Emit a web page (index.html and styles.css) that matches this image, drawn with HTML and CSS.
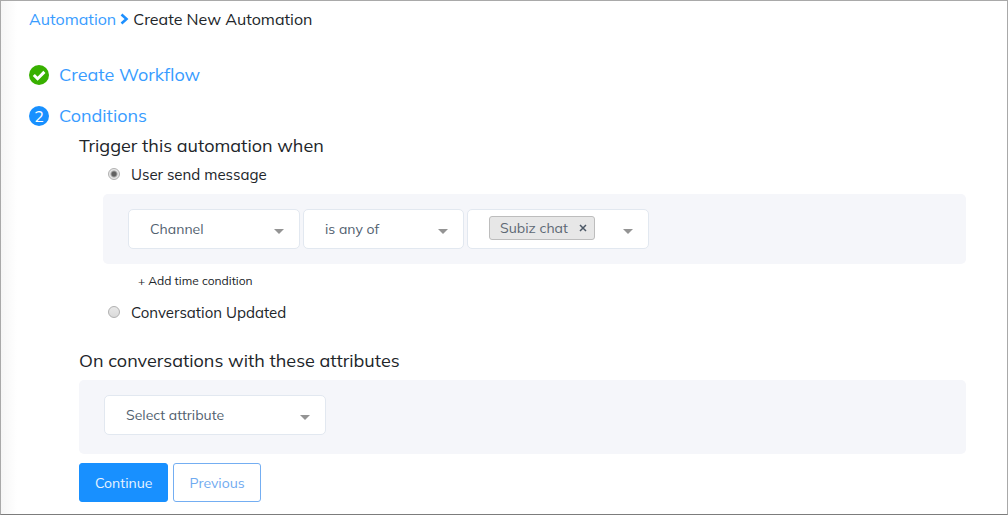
FILE: index.html
```html
<!DOCTYPE html>
<html lang="en">
<head>
<meta charset="utf-8">
<meta name="viewport" content="width=device-width, initial-scale=1">
<title>Create New Automation</title>
<link rel="stylesheet" href="styles.css">
</head>
<body>
<main class="page">
  <nav class="breadcrumb" aria-label="Breadcrumb">
    <a class="breadcrumb-link" href="#">Automation</a>
    <svg class="breadcrumb-icon" viewBox="0 0 9 12" aria-hidden="true"><path d="M1.5 1.5 6.5 6 1.5 10.5" fill="none" stroke="currentColor" stroke-width="2.6"/></svg>
    <span>Create New Automation</span>
  </nav>

  <a class="step" href="#">
    <svg class="step-icon" viewBox="0 0 20 20" aria-hidden="true"><circle cx="10" cy="10" r="10" fill="#38b000"/><path d="M4.8 10 8.6 13.7 15.4 6.9" fill="none" stroke="#fff" stroke-width="3"/></svg>
    <span>Create Workflow</span>
  </a>
  <a class="step" href="#">
    <span class="step-number">2</span>
    <span>Conditions</span>
  </a>

  <form class="conditions">
    <h2 class="section-title" id="trigger-title">Trigger this automation when</h2>
    <div class="triggers" role="radiogroup" aria-labelledby="trigger-title">
      <label class="option"><input class="radio" type="radio" name="trigger" checked>User send message</label>
      <div class="panel">
        <div class="select-wrap field">
          <select class="select" aria-label="Condition field"><option>Channel</option></select>
        </div>
        <div class="select-wrap operator">
          <select class="select" aria-label="Operator"><option>is any of</option></select>
        </div>
        <div class="tags">
          <span class="tag">Subiz chat<button class="tag-remove" type="button" aria-label="Remove Subiz chat"><svg class="tag-icon" viewBox="0 0 8 8" aria-hidden="true"><path d="M1 1 7 7M7 1 1 7" stroke="currentColor" stroke-width="1.5"/></svg></button></span>
          <button class="tags-toggle" type="button" aria-label="Show channels"></button>
        </div>
      </div>
      <button class="add-condition" type="button">+ Add time condition</button>
      <label class="option"><input class="radio" type="radio" name="trigger">Conversation Updated</label>
    </div>

    <h2 class="section-title attributes-title">On conversations with these attributes</h2>
    <div class="panel panel-attributes">
      <div class="select-wrap attribute">
        <select class="select" aria-label="Attribute"><option>Select attribute</option></select>
      </div>
    </div>

    <div class="actions">
      <button class="button button-primary" type="submit">Continue</button>
      <button class="button button-outline" type="button">Previous</button>
    </div>
  </form>
</main>
</body>
</html>
```
FILE: styles.css
```css
* { box-sizing: border-box; }

body {
  margin: 0;
  font-family: Mulish, Muli, "Open Sans", sans-serif;
  font-size: 16px;
  line-height: 24px;
  color: #212529;
}

button, select { font: inherit; }

.page {
  min-height: 100vh;
  padding: 6px 41px 12px 28px;
  border: 1px solid #a9a9a9;
  border-bottom-color: #7c7c7c;
  background: linear-gradient(to right, #f6f6f6, #fff 16px);
}

.breadcrumb {
  display: flex;
  align-items: center;
  gap: 4px;
  margin-bottom: 32px;
}

.breadcrumb-link { color: #389cff; text-decoration: none; }

.breadcrumb-icon { width: 9px; height: 12px; color: #1e90ff; }

.step {
  display: flex;
  align-items: center;
  gap: 10px;
  width: fit-content;
  margin-bottom: 17px;
  font-size: 18px;
  color: #389cff;
  text-decoration: none;
}

.step-icon, .step-number { width: 20px; height: 20px; }

.step-number {
  border-radius: 50%;
  background: #1890ff;
  color: #fff;
  font-size: 16px;
  line-height: 20px;
  text-align: center;
}

.conditions { margin: -11px 0 0 50px; }

.section-title { margin: 0; font-size: 18px; font-weight: 400; }

.triggers {
  display: flex;
  flex-direction: column;
  align-items: flex-start;
  padding: 4px 0 0 24px;
}

.option {
  display: flex;
  align-items: center;
  gap: 11px;
  padding: 1px 0 0 5px;
  font-size: 15px;
}

.radio {
  appearance: none;
  width: 12px;
  height: 12px;
  margin: 0 0 2px;
  border: 1px solid #b0b0b0;
  border-radius: 50%;
  background: linear-gradient(#e8e8e8, #dadada);
}

.radio:checked { background: radial-gradient(circle, #606060 0 2px, #e6e6e6 4px); }

.panel {
  display: flex;
  align-items: flex-start;
  gap: 3px;
  align-self: stretch;
  margin: 7px 0;
  padding: 15px 25px;
  border-radius: 5px;
  background: #f5f6fa;
}

.panel-attributes { margin-bottom: 9px; padding-bottom: 19px; }

.select-wrap, .tags {
  position: relative;
  height: 40px;
  border: 1px solid #e2e8f0;
  border-radius: 5px;
  background: #fff;
}

.field { width: 172px; }
.operator { width: 161px; }
.attribute { width: 222px; }

.select {
  appearance: none;
  width: 100%;
  height: 100%;
  padding: 0 36px 0 21px;
  border: 0;
  background: transparent;
  color: #52616f;
  font-size: 14px;
}

.select-wrap::after, .tags-toggle::after {
  content: "";
  border: 5px solid transparent;
  border-top-color: #949494;
  border-bottom: 0;
}

.select-wrap::after {
  position: absolute;
  right: 15px;
  top: 19px;
  pointer-events: none;
}

.tags {
  display: flex;
  align-items: center;
  justify-content: space-between;
  width: 182px;
  padding: 0 15px 2px 21px;
}

.tag {
  display: flex;
  align-items: center;
  gap: 11px;
  height: 24px;
  padding: 0 7px 0 10px;
  border: 1px solid #bdbdbd;
  border-radius: 3px;
  background: #e7e7e7;
  color: #5d6874;
  font-size: 14px;
}

.tag-remove, .tags-toggle {
  display: flex;
  padding: 0;
  border: 0;
  background: none;
  color: #4c5866;
}

.tag-icon { width: 8px; height: 8px; }

.tags-toggle { padding-top: 6px; }

.add-condition {
  margin-left: 35px;
  margin-bottom: 9px;
  padding: 0;
  border: 0;
  background: none;
  color: #212529;
  font-size: 12px;
  line-height: 20px;
}

.attributes-title { margin-top: 24px; }

.actions { display: flex; gap: 5px; }

.button {
  height: 39px;
  padding: 0 15px;
  border: 1px solid #1890ff;
  border-radius: 3px;
  font-size: 14px;
}

.button-primary { background: #1890ff; color: #e8f4ff; }

.button-outline {
  border-color: #74aef2;
  background: #fff;
  color: #70aaf0;
}
```
